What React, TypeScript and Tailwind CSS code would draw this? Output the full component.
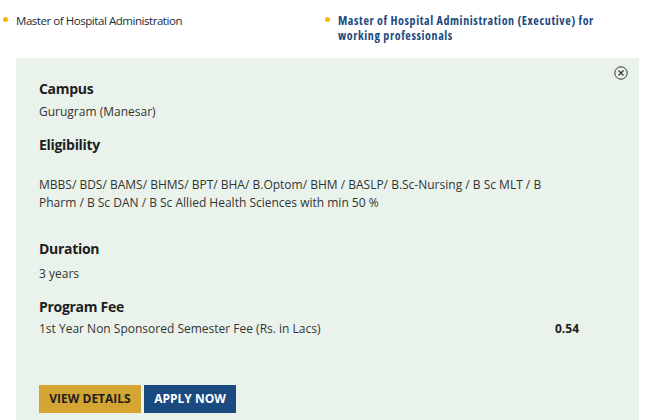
export default function App() {
  const font = { fontFamily: '"Open Sans", "Noto Sans", sans-serif' };
  return (
    <div style={font} className="w-[648px] h-[420px] overflow-hidden bg-white text-[#333]">
      {/* program tabs */}
      <div className="grid grid-cols-[322px_1fr] pt-[13px] h-[58px]">
        <div className="relative pl-4 text-[11.5px] leading-[15px] tracking-[-0.45px] text-[#1d2a3a]">
          <span className="absolute left-[3px] top-[4px] w-[5px] h-[5px] rounded-full bg-[#f6b800]" />
          Master of Hospital Administration
        </div>
        <div className="relative pl-4 w-[300px] text-[12px] leading-[15px] font-bold font-stretch-condensed tracking-[0.6px] text-[#1b4a7f]">
          <span className="absolute left-[3px] top-[4px] w-[5px] h-[5px] rounded-full bg-[#f6b800]" />
          Master of Hospital Administration (Executive) for working professionals
        </div>
      </div>

      {/* detail panel */}
      <div className="relative ml-4 w-[623px] h-[400px] bg-[#e9f3ec] pl-[23px] pt-[21px]">
        <button className="absolute right-[11px] top-[8px] w-[14px] h-[14px] text-[#333]">
          <svg viewBox="0 0 14 14" width="14" height="14" fill="none" stroke="currentColor" strokeWidth="1">
            <circle cx="7" cy="7" r="6.2" />
            <path d="M4.5 4.5 9.5 9.5M9.5 4.5 4.5 9.5" strokeWidth="1.2" />
          </svg>
        </button>

        <div className="w-[540px]">
          <h3 className="text-[14px] leading-[20px] font-bold tracking-[-0.3px] text-[#1e1e1e]">Campus</h3>
          <p className="mt-1 text-[12px] leading-[18px]">Gurugram (Manesar)</p>

          <h3 className="mt-[14px] text-[14px] leading-[20px] font-bold tracking-[-0.3px] text-[#1e1e1e]">Eligibility</h3>
          <p className="mt-[21px] text-[12px] leading-[18px]">
            MBBS/ BDS/ BAMS/ BHMS/ BPT/ BHA/ B.Optom/ BHM / BASLP/ B.Sc-Nursing / B Sc MLT / B Pharm / B Sc DAN / B Sc Allied Health Sciences with min 50 %
          </p>

          <h3 className="mt-[27px] text-[14px] leading-[20px] font-bold tracking-[-0.3px] text-[#1e1e1e]">Duration</h3>
          <p className="mt-[6px] text-[12px] leading-[18px]">3 years</p>

          <h3 className="mt-[14px] text-[14px] leading-[20px] font-bold tracking-[-0.3px] text-[#1e1e1e]">Program Fee</h3>
          <div className="mt-[3px] flex justify-between text-[12px] leading-[18px]">
            <span>1st Year Non Sponsored Semester Fee (Rs. in Lacs)</span>
            <span className="font-bold text-[#1e1e1e]">0.54</span>
          </div>
        </div>

        <div className="mt-[47px] flex gap-[3px]">
          <button className="w-[102px] h-[28px] bg-[#d4a533] text-[12px] font-bold uppercase text-[#1e1e1e]">
            View Details
          </button>
          <button className="w-[92px] h-[28px] bg-[#1a4a80] text-[12px] font-bold uppercase text-white">
            Apply Now
          </button>
        </div>
      </div>
    </div>
  );
}
